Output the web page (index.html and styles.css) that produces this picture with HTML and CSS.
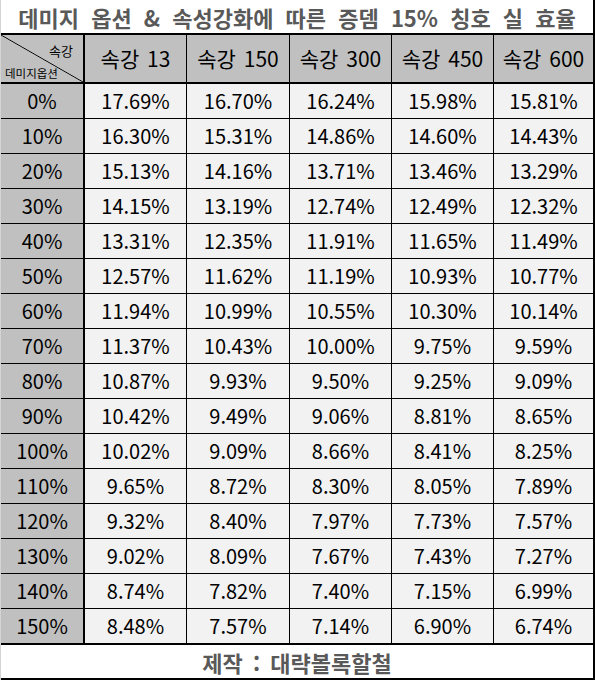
FILE: index.html
```html
<!DOCTYPE html>
<html lang="ko">
<head>
<meta charset="utf-8">
<link rel="stylesheet" href="styles.css">
</head>
<body>
<div class="sheet">
  <div class="title">데미지 옵션 &amp; 속성강화에 따른 증뎀 15% 칭호 실 효율</div>
  <div class="grid">
    <div class="cell corner"><span class="c-top">속강</span><span class="c-bot">데미지옵션</span></div>
    <div class="cell head">속강 13</div>
    <div class="cell head">속강 150</div>
    <div class="cell head">속강 300</div>
    <div class="cell head">속강 450</div>
    <div class="cell head last">속강 600</div>

    <div class="cell lab">0%</div><div class="cell val">17.69%</div><div class="cell val">16.70%</div><div class="cell val">16.24%</div><div class="cell val">15.98%</div><div class="cell val last">15.81%</div>
    <div class="cell lab">10%</div><div class="cell val">16.30%</div><div class="cell val">15.31%</div><div class="cell val">14.86%</div><div class="cell val">14.60%</div><div class="cell val last">14.43%</div>
    <div class="cell lab">20%</div><div class="cell val">15.13%</div><div class="cell val">14.16%</div><div class="cell val">13.71%</div><div class="cell val">13.46%</div><div class="cell val last">13.29%</div>
    <div class="cell lab">30%</div><div class="cell val">14.15%</div><div class="cell val">13.19%</div><div class="cell val">12.74%</div><div class="cell val">12.49%</div><div class="cell val last">12.32%</div>
    <div class="cell lab">40%</div><div class="cell val">13.31%</div><div class="cell val">12.35%</div><div class="cell val">11.91%</div><div class="cell val">11.65%</div><div class="cell val last">11.49%</div>
    <div class="cell lab">50%</div><div class="cell val">12.57%</div><div class="cell val">11.62%</div><div class="cell val">11.19%</div><div class="cell val">10.93%</div><div class="cell val last">10.77%</div>
    <div class="cell lab">60%</div><div class="cell val">11.94%</div><div class="cell val">10.99%</div><div class="cell val">10.55%</div><div class="cell val">10.30%</div><div class="cell val last">10.14%</div>
    <div class="cell lab">70%</div><div class="cell val">11.37%</div><div class="cell val">10.43%</div><div class="cell val">10.00%</div><div class="cell val">9.75%</div><div class="cell val last">9.59%</div>
    <div class="cell lab">80%</div><div class="cell val">10.87%</div><div class="cell val">9.93%</div><div class="cell val">9.50%</div><div class="cell val">9.25%</div><div class="cell val last">9.09%</div>
    <div class="cell lab">90%</div><div class="cell val">10.42%</div><div class="cell val">9.49%</div><div class="cell val">9.06%</div><div class="cell val">8.81%</div><div class="cell val last">8.65%</div>
    <div class="cell lab">100%</div><div class="cell val">10.02%</div><div class="cell val">9.09%</div><div class="cell val">8.66%</div><div class="cell val">8.41%</div><div class="cell val last">8.25%</div>
    <div class="cell lab">110%</div><div class="cell val">9.65%</div><div class="cell val">8.72%</div><div class="cell val">8.30%</div><div class="cell val">8.05%</div><div class="cell val last">7.89%</div>
    <div class="cell lab">120%</div><div class="cell val">9.32%</div><div class="cell val">8.40%</div><div class="cell val">7.97%</div><div class="cell val">7.73%</div><div class="cell val last">7.57%</div>
    <div class="cell lab">130%</div><div class="cell val">9.02%</div><div class="cell val">8.09%</div><div class="cell val">7.67%</div><div class="cell val">7.43%</div><div class="cell val last">7.27%</div>
    <div class="cell lab">140%</div><div class="cell val">8.74%</div><div class="cell val">7.82%</div><div class="cell val">7.40%</div><div class="cell val">7.15%</div><div class="cell val last">6.99%</div>
    <div class="cell lab end">150%</div><div class="cell val end">8.48%</div><div class="cell val end">7.57%</div><div class="cell val end">7.14%</div><div class="cell val end">6.90%</div><div class="cell val last end">6.74%</div>
  </div>
  <div class="footer">제작 : 대략볼록할철</div>
</div>
</body>
</html>
```

FILE: styles.css
```css
* { box-sizing: border-box; }
html, body { margin: 0; padding: 0; background: #fff; }
body { font-family: "Noto Sans CJK KR", "Noto Sans", sans-serif; color: #000; }

.sheet {
  width: 595px;
  height: 680px;
  border-left: 1px solid #d4d4d4;
  display: flex;
  flex-direction: column;
}

.title {
  height: 33px;
  border-right: 2px solid #000;
  display: flex;
  align-items: center;
  justify-content: center;
  font-size: 22px;
  font-weight: bold;
  color: #595959;
  word-spacing: 6px;
  line-height: 1;
  padding-top: 1px;
}

.grid {
  display: grid;
  grid-template-columns: 84px 102px 103px 102px 102px 101px;
  grid-template-rows: 51px repeat(15, 35px) 36px;
}

.cell {
  display: flex;
  align-items: center;
  justify-content: center;
  font-size: 20px;
  line-height: 1;
  border-right: 1px solid #000;
  border-bottom: 1px solid #000;
  word-spacing: 4px;
}

.head {
  background: #c0c0c0;
  border-top: 2px solid #000;
  border-bottom: 2px solid #000;
  font-size: 21px;
  word-spacing: 2px;
}

.corner {
  background:
    linear-gradient(to top right, transparent calc(50% - 0.8px), #000 50%, transparent calc(50% + 0.8px)),
    #c0c0c0;
  border-top: 2px solid #000;
  border-bottom: 2px solid #000;
  border-right: 2px solid #000;
  flex-direction: column;
  align-items: stretch;
  justify-content: space-between;
  padding: 9px 10px 3px 4px;
}
.c-top { font-size: 13px; text-align: right; line-height: 1; }
.c-bot { font-size: 11.5px; text-align: left; line-height: 1; }

.lab {
  background: #c0c0c0;
  border-right: 2px solid #000;
}
.val { background: #f2f2f2; }
.last { border-right: 2px solid #000; }
.end { border-bottom: 2px solid #000; }

.footer {
  height: 35px;
  border-right: 2px solid #000;
  border-bottom: 2px solid #000;
  display: flex;
  align-items: center;
  justify-content: center;
  font-size: 22px;
  font-weight: bold;
  color: #595959;
  word-spacing: 4px;
  line-height: 1;
}
```
